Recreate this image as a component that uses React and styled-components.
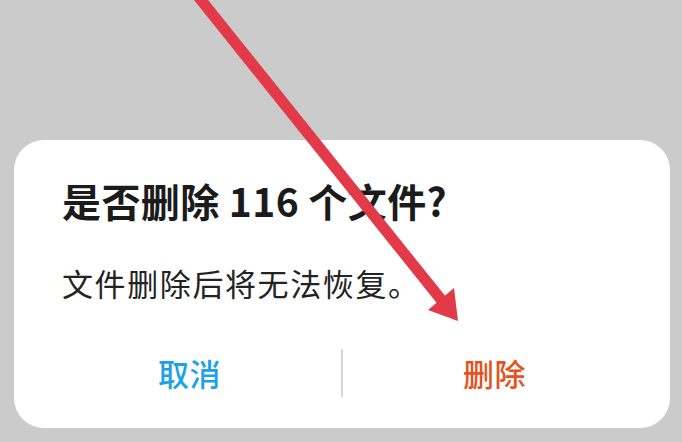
import React from "react";
import styled, { createGlobalStyle } from "styled-components";

const Global = createGlobalStyle`
  html, body {
    margin: 0;
    padding: 0;
    background: #cbcbcb;
  }
  * {
    box-sizing: border-box;
  }
`;

const Screen = styled.div`
  position: relative;
  width: 682px;
  height: 442px;
  overflow: hidden;
  background: #cbcbcb;
  padding: 140px 12px 0 14px;
  font-family: "Noto Sans CJK SC", "Noto Sans", sans-serif;
`;

const Dialog = styled.div`
  width: 656px;
  height: 288px;
  background: #ffffff;
  border-radius: 30px;
  display: flex;
  flex-direction: column;
  padding: 35px 0 31px;
`;

const Title = styled.h2`
  margin: 0;
  padding: 0 40px 0 48px;
  font-size: 39px;
  line-height: 50px;
  font-weight: 600;
  color: #1b1b1b;
  letter-spacing: 0.4px;
  white-space: nowrap;
`;

const Message = styled.p`
  margin: 38px 0 0;
  padding: 0 40px 0 48px;
  font-size: 31px;
  line-height: 40px;
  font-weight: 400;
  color: #232323;
  letter-spacing: 1.6px;
  white-space: nowrap;
`;

const Actions = styled.div`
  margin-top: auto;
  height: 48px;
  display: flex;
  align-items: stretch;
  padding: 0 24px;
`;

const Action = styled.button`
  flex: 1;
  border: none;
  background: none;
  padding: 0;
  font-family: inherit;
  font-size: 31px;
  font-weight: 500;
  line-height: 48px;
  color: ${(p) => p.color};
  letter-spacing: 0.5px;
`;

const Divider = styled.span`
  width: 2px;
  background: #d6d6d6;
`;

const Overlay = styled.svg`
  position: absolute;
  left: 0;
  top: 0;
  pointer-events: none;
`;

const Arrow = () => (
  <Overlay width="682" height="442" viewBox="0 0 682 442">
    <line
      x1="193"
      y1="-10"
      x2="443"
      y2="302"
      stroke="#e23a48"
      strokeWidth="11"
    />
    <polygon points="458,321 428,310 454,288" fill="#e23a48" />
  </Overlay>
);

export default function App() {
  return (
    <Screen>
      <Global />
      <Dialog>
        <Title>是否删除 116 个文件?</Title>
        <Message>文件删除后将无法恢复。</Message>
        <Actions>
          <Action color="#1ea2e6">取消</Action>
          <Divider />
          <Action color="#e4521d">删除</Action>
        </Actions>
      </Dialog>
      <Arrow />
    </Screen>
  );
}
